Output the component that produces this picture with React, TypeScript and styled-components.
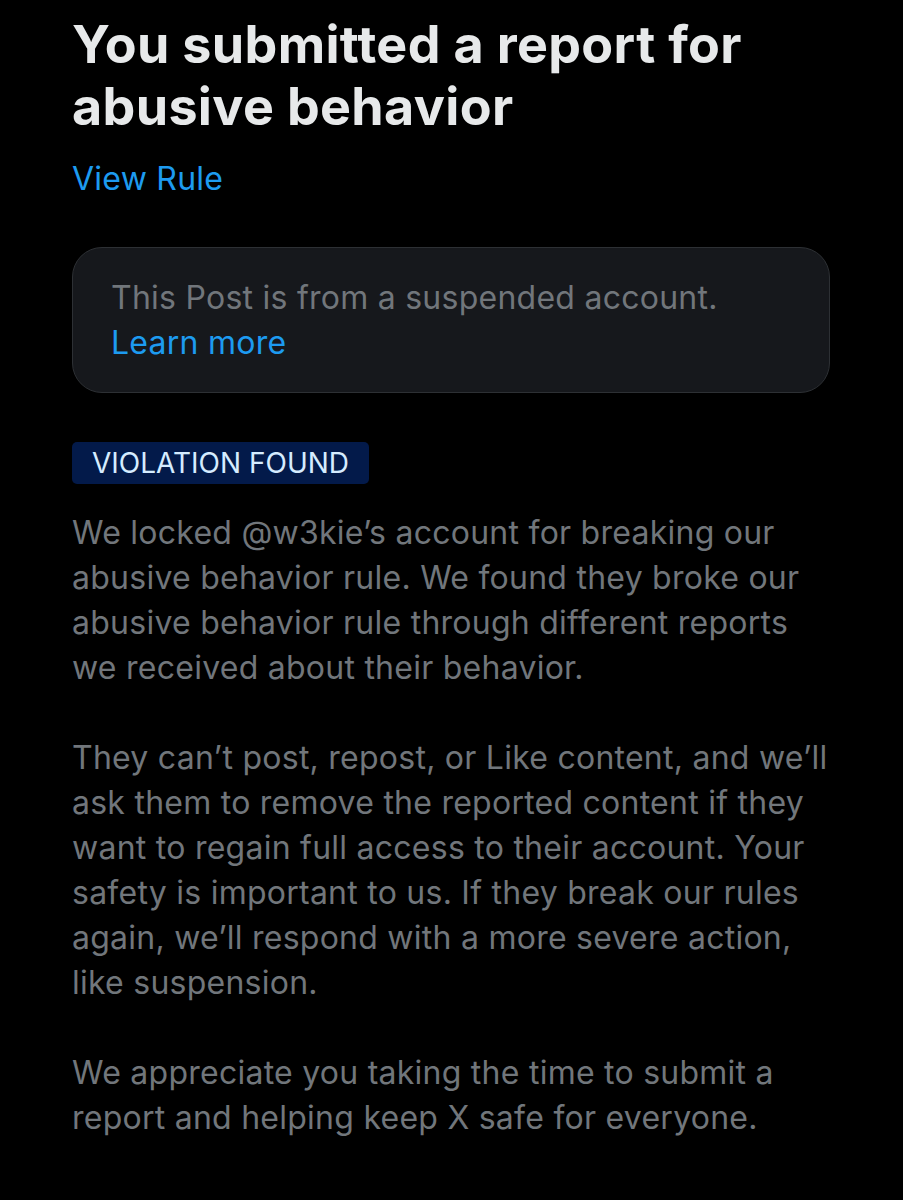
import React from "react";
import styled, { createGlobalStyle } from "styled-components";

const Global = createGlobalStyle`
  html, body { margin: 0; padding: 0; background: #000; }
  body { font-family: Inter, "Noto Sans", sans-serif; -webkit-font-smoothing: antialiased; }
`;

const Page = styled.main`
  width: 903px;
  min-height: 1200px;
  background: #000;
  box-sizing: border-box;
  padding: 14px 73px 0 72px;
  display: flex;
  flex-direction: column;
`;

const Title = styled.h1`
  margin: 0;
  color: #e7e9ea;
  font-size: 52px;
  line-height: 62px;
  font-weight: 700;
  letter-spacing: 0.35px;
`;

const Link = styled.a<{ $block?: boolean }>`
  color: #1d9bf0;
  text-decoration: none;
  font-size: 32px;
  line-height: 45px;
  display: ${(p) => (p.$block ? "block" : "inline")};
  letter-spacing: 0.25px;
`;

const RuleLink = styled(Link)`
  margin-top: 18px;
  align-self: flex-start;
`;

const Notice = styled.section`
  margin-top: 46px;
  background: #16181c;
  border: 1px solid #2d3034;
  border-radius: 30px;
  padding: 27px 38px 27px;
  color: #71767b;
  font-size: 32px;
  line-height: 45px;
  letter-spacing: 0.25px;
`;

const Badge = styled.span`
  margin-top: 49px;
  align-self: flex-start;
  background: #031a4a;
  color: #d5ecff;
  font-size: 28px;
  line-height: 42px;
  padding: 0 20px;
  border-radius: 5px;
  letter-spacing: 0;
`;

const Body = styled.div`
  margin-top: 26px;
  color: #71767b;
  font-size: 32px;
  line-height: 45px;
  letter-spacing: 0.25px;
  display: flex;
  flex-direction: column;
  gap: 45px;
`;

const Para = styled.p`
  margin: 0;
  white-space: nowrap;
`;

const paragraphs = [
  [
    "We locked @w3kie’s account for breaking our",
    "abusive behavior rule. We found they broke our",
    "abusive behavior rule through different reports",
    "we received about their behavior.",
  ],
  [
    "They can’t post, repost, or Like content, and we’ll",
    "ask them to remove the reported content if they",
    "want to regain full access to their account. Your",
    "safety is important to us. If they break our rules",
    "again, we’ll respond with a more severe action,",
    "like suspension.",
  ],
  [
    "We appreciate you taking the time to submit a",
    "report and helping keep X safe for everyone.",
  ],
];

export default function App() {
  return (
    <Page>
      <Global />
      <Title>
        You submitted a report for
        <br />
        abusive behavior
      </Title>
      <RuleLink href="#">View Rule</RuleLink>
      <Notice>
        This Post is from a suspended account.
        <Link href="#" $block>
          Learn more
        </Link>
      </Notice>
      <Badge>VIOLATION FOUND</Badge>
      <Body>
        {paragraphs.map((lines, i) => (
          <Para key={i}>
            {lines.map((l, j) => (
              <React.Fragment key={j}>
                {l}
                {j < lines.length - 1 && <br />}
              </React.Fragment>
            ))}
          </Para>
        ))}
      </Body>
    </Page>
  );
}
